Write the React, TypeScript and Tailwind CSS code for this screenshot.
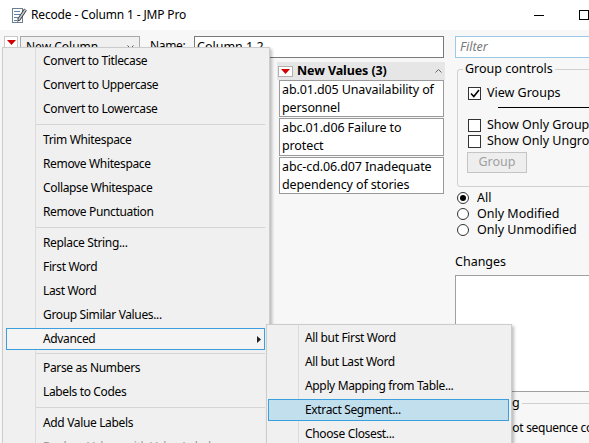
import React from "react";

type Entry =
  | { t: "item"; label: string; hl?: boolean; arrow?: boolean; dis?: boolean }
  | { t: "sep"; h: number };

const mainMenu: Entry[] = [
  { t: "item", label: "Convert to Titlecase" },
  { t: "item", label: "Convert to Uppercase" },
  { t: "item", label: "Convert to Lowercase" },
  { t: "sep", h: 7 },
  { t: "item", label: "Trim Whitespace" },
  { t: "item", label: "Remove Whitespace" },
  { t: "item", label: "Collapse Whitespace" },
  { t: "item", label: "Remove Punctuation" },
  { t: "sep", h: 7 },
  { t: "item", label: "Replace String..." },
  { t: "item", label: "First Word" },
  { t: "item", label: "Last Word" },
  { t: "item", label: "Group Similar Values..." },
  { t: "item", label: "Advanced", hl: true, arrow: true },
  { t: "sep", h: 5 },
  { t: "item", label: "Parse as Numbers" },
  { t: "item", label: "Labels to Codes" },
  { t: "sep", h: 7 },
  { t: "item", label: "Add Value Labels" },
  { t: "item", label: "Replace Values with Value Labels", dis: true },
];

const subMenu: Entry[] = [
  { t: "item", label: "All but First Word" },
  { t: "item", label: "All but Last Word" },
  { t: "item", label: "Apply Mapping from Table..." },
  { t: "item", label: "Extract Segment...", hl: true },
  { t: "item", label: "Choose Closest..." },
];

function TitleIcon() {
  return (
    <svg width="16" height="18" viewBox="0 0 16 18">
      <rect x="1.5" y="2.5" width="10" height="14" fill="#fff" stroke="#6d7f92" />
      <line x1="3" y1="5.5" x2="9" y2="5.5" stroke="#5b82ad" />
      <line x1="3" y1="8.5" x2="9" y2="8.5" stroke="#5b82ad" />
      <line x1="3" y1="11.5" x2="7" y2="11.5" stroke="#5b82ad" />
      <line x1="3" y1="14.5" x2="6" y2="14.5" stroke="#5b82ad" />
      <line x1="7.5" y1="14" x2="14.5" y2="3.5" stroke="#3a3a3a" strokeWidth="3.2" />
      <line x1="7.5" y1="14" x2="14.5" y2="3.5" stroke="#c4ccd4" strokeWidth="1.4" />
      <path d="M6.2 16 L6.8 13.2 L8.6 14.4 Z" fill="#333" />
    </svg>
  );
}

function RedTri() {
  return (
    <svg width="9" height="5" viewBox="0 0 9 5">
      <path d="M0 0 H9 L4.5 5 Z" fill="#d00000" />
    </svg>
  );
}

function CheckBox({ checked }: { checked?: boolean }) {
  return (
    <div className="w-[13px] h-[13px] border border-[#333] bg-white flex items-center justify-center shrink-0">
      {checked && (
        <svg width="10" height="9" viewBox="0 0 10 9">
          <path d="M1 4.5 L3.8 7.5 L9 1" fill="none" stroke="#000" strokeWidth="1.6" />
        </svg>
      )}
    </div>
  );
}

function Radio({ on }: { on?: boolean }) {
  return (
    <div className="w-[12px] h-[12px] rounded-full border border-[#333] bg-white flex items-center justify-center shrink-0">
      {on && <div className="w-[6px] h-[6px] rounded-full bg-black" />}
    </div>
  );
}

function Menu({
  entries,
  textPl,
  gutter,
  hlMl,
  hlMr,
  sepMl,
  className,
}: {
  entries: Entry[];
  textPl: string;
  gutter: string;
  hlMl: string;
  hlMr: string;
  sepMl: string;
  className: string;
}) {
  return (
    <div
      className={
        "absolute bg-[#f0f0f0] border border-[#cccccc] pt-[1px] shadow-[2px_2px_3px_rgba(0,0,0,0.25)] " +
        className
      }
    >
      <div className={"absolute top-0 bottom-0 w-px bg-[#dcdcdc] " + gutter} />
      {entries.map((e, i) =>
        e.t === "sep" ? (
          <div key={i} className={e.h === 5 ? "h-[5px] flex items-center" : "h-[7px] flex items-center"}>
            <div className={"h-px flex-1 bg-[#d5d5d5] mr-[4px] " + sepMl} />
          </div>
        ) : (
          <div key={i} className="relative h-[24px] flex items-center">
            {e.hl && (
              <div
                className={
                  "absolute top-[1px] bottom-[1px] border " +
                  hlMl +
                  " " +
                  hlMr +
                  (e.arrow ? " border-[#3a9fdc] bg-[#f4f4f4]" : " border-[#3a9fdc] bg-[#c2dfee]")
                }
              />
            )}
            <span
              className={
                "relative text-[12px] tracking-[-0.35px] whitespace-nowrap " +
                textPl +
                (e.dis ? " text-[#9a9a9a]" : " text-black")
              }
            >
              {e.label}
            </span>
            {e.arrow && (
              <svg className="absolute right-[8px] top-[9px]" width="4" height="7" viewBox="0 0 4 7">
                <path d="M0 0 L4 3.5 L0 7 Z" fill="#222" />
              </svg>
            )}
          </div>
        )
      )}
    </div>
  );
}

export default function App() {
  return (
    <div className="relative w-[589px] h-[443px] overflow-hidden bg-[#f7f7f7] font-['Noto_Sans',sans-serif] text-black">
      {/* Title bar */}
      <div className="h-[30px] bg-white flex items-center">
        <div className="ml-[11px] w-[16px] h-[18px]">
          <TitleIcon />
        </div>
        <span className="ml-[4px] text-[12px] tracking-[-0.16px]">Recode - Column 1 - JMP Pro</span>
        <div className="ml-auto flex items-center">
          <div className="w-[10px] h-px bg-black" />
          <div className="ml-[35px] w-[10px] h-[10px] border border-black" />
        </div>
      </div>

      {/* Body */}
      <div className="flex">
        {/* Left part */}
        <div className="w-[455px] shrink-0">
          <div className="mt-[6px] flex items-start h-[22px]">
            <div className="ml-[4px] w-[14px] h-[12px] bg-white border border-[#c8c8c8] flex items-center justify-center">
              <RedTri />
            </div>
            <div className="ml-[2px] w-[120px] h-[22px] border border-[#a8a8a8] bg-[#f0f0f0] flex items-center px-[5px] text-[12px]">
              <span>New Column...</span>
              <svg className="ml-auto" width="7" height="4" viewBox="0 0 7 4">
                <path d="M0.5 0.5 L3.5 3.5 L6.5 0.5" fill="none" stroke="#555" />
              </svg>
            </div>
            <div className="ml-[10px] w-[44px] text-[12px] tracking-[-0.35px] leading-[20px]">Name:</div>
            <div className="w-[250px] h-[22px] border border-[#7a7a7a] bg-white text-[12.5px] px-[2px] leading-[20px]">
              Column 1 2
            </div>
          </div>

          {/* New Values panel */}
          <div className="mt-[4px] flex">
            <div className="w-[277px] shrink-0" />
            <div className="w-[168px]">
              <div className="h-[18px] bg-[#e6e6e6] flex items-center">
                <div className="ml-[1px] w-[15px] h-[11px] bg-white border border-[#b0b0b0] flex items-center justify-center">
                  <RedTri />
                </div>
                <span className="ml-[4px] text-[12.5px] font-bold tracking-[-0.1px]">New Values (3)</span>
                <svg className="ml-auto mr-[3px]" width="7" height="4" viewBox="0 0 7 4">
                  <path d="M0.5 3.5 L3.5 0.5 L6.5 3.5" fill="none" stroke="#666" />
                </svg>
              </div>
              <div className="ml-[2px] w-[165px] flex flex-col gap-[1px]">
                <div className="h-[37px] border border-[#9a9a9a] bg-white px-[2px] text-[12.5px] leading-[17.5px] tracking-[-0.12px]">
                  ab.01.d05 Unavailability of personnel
                </div>
                <div className="h-[38px] border border-[#9a9a9a] bg-white px-[2px] text-[12.5px] leading-[17.5px] tracking-[-0.12px]">
                  abc.01.d06 Failure to protect
                </div>
                <div className="h-[37px] border border-[#9a9a9a] bg-white px-[2px] text-[12.5px] leading-[17.5px] tracking-[-0.12px]">
                  abc-cd.06.d07 Inadequate dependency of stories
                </div>
              </div>
            </div>
          </div>
        </div>

        {/* Right part */}
        <div className="w-[160px] shrink-0 text-[12.5px]">
          <div className="mt-[6px] h-[22px] border border-[#9cc9e6] bg-white px-[4px] leading-[20px] italic text-[#7a7a7a]">
            Filter
          </div>

          <fieldset className="mt-[3px] ml-[2px] border border-[#d0d0d0] rounded-[3px] pb-[13px]">
            <legend className="ml-[5px] px-[2px] leading-[16px]">Group controls</legend>
            <div className="mt-[8px] h-[16px] flex items-center pl-[10px] gap-[6px]">
              <CheckBox checked />
              <span>View Groups</span>
            </div>
            <div className="mt-[6px] ml-[40px] h-px bg-black" />
            <div className="mt-[9px] h-[16px] flex items-center pl-[10px] gap-[6px] whitespace-nowrap">
              <CheckBox />
              <span>Show Only Groups</span>
            </div>
            <div className="h-[16px] flex items-center pl-[10px] gap-[6px] whitespace-nowrap">
              <CheckBox />
              <span>Show Only Ungrouped</span>
            </div>
            <div className="mt-[3px] ml-[9px] w-[60px] h-[21px] border border-[#c4c4c4] bg-[#eeeeee] text-[#a0a0a0] flex items-center justify-center">
              Group
            </div>
          </fieldset>

          <div className="mt-[3px] flex flex-col pl-[2px]">
            <div className="h-[16px] flex items-center gap-[8px]">
              <Radio on />
              <span>All</span>
            </div>
            <div className="h-[16px] flex items-center gap-[8px]">
              <Radio />
              <span>Only Modified</span>
            </div>
            <div className="h-[16px] flex items-center gap-[8px]">
              <Radio />
              <span>Only Unmodified</span>
            </div>
          </div>

          <div className="mt-[16px] h-[16px] leading-[16px]">Changes</div>
          <div className="mt-[5px] h-[117px] border border-[#a0a0a0] bg-white" />

          <fieldset className="mt-[3px] ml-[2px] border border-[#d0d0d0] rounded-[3px] h-[60px]">
            <legend className="ml-[5px] px-[2px] leading-[16px]">Recoding</legend>
            <div className="mt-[9px] h-[16px] flex items-center pl-[10px] gap-[6px] whitespace-nowrap text-[12px] tracking-[-0.3px]">
              <CheckBox />
              <span>Do not sequence codes</span>
            </div>
          </fieldset>
        </div>
      </div>

      {/* Popup menus */}
      <Menu
        entries={mainMenu}
        className="left-[2px] top-[47px] w-[268px] h-[420px]"
        textPl="pl-[40px]"
        gutter="left-[32px]"
        hlMl="left-[3px]"
        hlMr="right-[4px]"
        sepMl="ml-[33px]"
      />
      <Menu
        entries={subMenu}
        className="left-[266px] top-[324px] w-[246px] h-[140px]"
        textPl="pl-[38px]"
        gutter="left-[31px]"
        hlMl="left-[1px]"
        hlMr="right-[2px]"
        sepMl="ml-[31px]"
      />
    </div>
  );
}
